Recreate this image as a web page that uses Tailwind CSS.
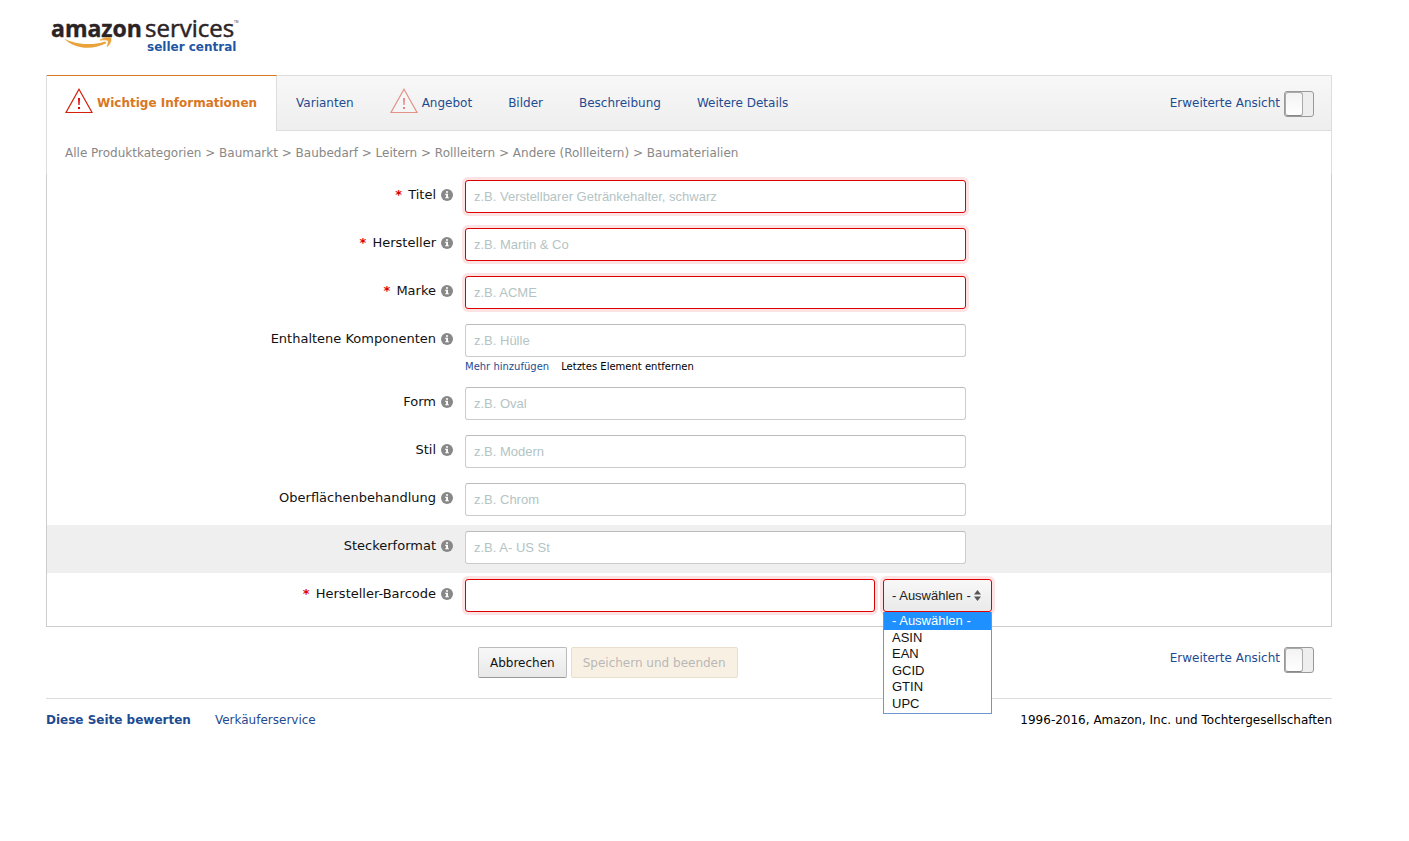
<!DOCTYPE html>
<html lang="de">
<head>
    <meta charset="UTF-8">
    <meta name="viewport" content="width=device-width, initial-scale=1.0">
    <title>Amazon Services Seller Central</title>
    <script src="https://cdn.jsdelivr.net/npm/@tailwindcss/browser@4"></script>
</head>
<body class="bg-white font-['Verdana','DejaVu_Sans',sans-serif] text-[12px] leading-5 text-[#111]">

    <!-- SVG SYMBOLS -->
    <svg class="hidden">
        <symbol id="warn" viewBox="0 0 28 26">
            <path d="M14 1.2 L27 24.5 H1 Z" fill="#fff" fill-opacity=".6" stroke="#d1200c" stroke-width="1.2"/>
            <path d="M13 10h2l-.4 7h-1.2zM13 19h2v2h-2z" fill="#d00"/>
        </symbol>
        <symbol id="info" viewBox="0 0 12 12">
            <circle cx="6" cy="6" r="6" fill="#888"/>
            <path d="M5 2.2h2v1.6H5zM4.2 4.8H7v3.4h.9v1.1H4.2V8.200h.9V5.900h-.9z" fill="#fff"/>
        </symbol>
    </svg>

    <div class="ml-[46px] mr-[77px]">

        <!-- LOGO -->
        <header class="h-[75px] pt-3">
            <svg class="block" width="200" height="44" viewBox="0 0 200 44" role="img" aria-label="amazon services seller central">
                <text x="5" y="25" font-family="Open Sans, sans-serif" font-size="23" font-weight="700" fill="#2b2324" stroke="#2b2324" stroke-width=".4">amazon</text>
                <text x="99" y="25" font-family="Open Sans, sans-serif" font-size="24" fill="#2b2324" stroke="#2b2324" stroke-width=".5">services</text>
                <text x="188" y="11" font-family="Open Sans, sans-serif" font-size="3" fill="#2b2324">TM</text>
                <text x="101" y="39" font-family="DejaVu Sans, sans-serif" font-size="12" font-weight="700" fill="#1f55a5">seller central</text>
                <path d="M18 26.500C29 32.500 46 34 59 29.500L60.500 31C47 38.500 29 37.500 18 26.500Z" fill="#e9a33a"/>
                <path d="M54 28.200C58 25.400 62 25.200 65 26C65.500 29.500 64 32.500 61 34.800C62 32 62.700 29.800 62 28.600C60 27.600 57 27.800 54 28.200Z" fill="#e9a33a" stroke="#e9a33a" stroke-width=".6"/>
            </svg>
        </header>

        <main>
            <!-- TABS -->
            <nav class="flex h-14 border border-[#ddd] bg-linear-to-b from-[#f8f8f8] to-[#eee]">
                <a href="#" class="-mt-px -mb-px flex items-center gap-1 border-t border-r border-t-[#d9771f] border-r-[#ddd] bg-white pr-[19px] pb-[2px] pl-[18px] font-bold text-[#d9771f]">
                    <svg class="-mt-1 h-[26px] w-7"><use href="#warn"/></svg>
                    Wichtige Informationen
                </a>
                <div class="flex flex-1 items-center gap-9 pl-[19px] text-[#1f4b91]">
                    <a href="#">Varianten</a>
                    <a href="#" class="flex items-center gap-1">
                        <svg class="-mt-1 h-[26px] w-7 opacity-45"><use href="#warn"/></svg>
                        Angebot
                    </a>
                    <a href="#">Bilder</a>
                    <a href="#">Beschreibung</a>
                    <a href="#">Weitere Details</a>
                </div>
                <label class="flex items-center gap-1 pr-[17px] text-[#1f4b91]">
                    Erweiterte Ansicht
                    <span class="mt-[2px] flex h-[26px] w-[30px] rounded-[3px] border border-[#999] bg-[#eee]">
                        <input type="checkbox" class="h-6 w-[18px] appearance-none rounded-[3px] border border-[#aaa] border-b-[#888] bg-linear-to-b from-[#f3f3f3] to-white">
                    </span>
                </label>
            </nav>

            <div class="h-[43px] border-x border-[#ddd] px-[18px] pt-3 text-[#888]">
                Alle Produktkategorien &gt; Baumarkt &gt; Baubedarf &gt; Leitern &gt; Rollleitern &gt; Andere (Rollleitern) &gt; Baumaterialien
            </div>

            <!-- FORM -->
            <form id="product" class="border-x border-b border-[#ccc] pb-[5px] text-[13px]">
                <div class="grid grid-cols-[406px_501px] gap-3 pt-[6px] pb-[9px]">
                    <div class="flex items-start justify-end gap-[5px] pt-[5px]">
                        <label for="titel"><span class="mr-[2px] font-bold text-[#d00]">*</span> Titel</label>
                        <svg class="mt-1 size-3"><use href="#info"/></svg>
                    </div>
                    <input id="titel" placeholder="z.B. Verstellbarer Getränkehalter, schwarz" class="h-[33px] rounded-[3px] border border-[#d00] bg-white px-2 font-['Liberation_Sans',sans-serif] ring-3 ring-[#fde3e3] placeholder:text-[#b4c4c4]">
                </div>
                <div class="grid grid-cols-[406px_501px] gap-3 pt-[6px] pb-[9px]">
                    <div class="flex items-start justify-end gap-[5px] pt-[5px]">
                        <label for="hersteller"><span class="mr-[2px] font-bold text-[#d00]">*</span> Hersteller</label>
                        <svg class="mt-1 size-3"><use href="#info"/></svg>
                    </div>
                    <input id="hersteller" placeholder="z.B. Martin &amp; Co" class="h-[33px] rounded-[3px] border border-[#d00] bg-white px-2 font-['Liberation_Sans',sans-serif] ring-3 ring-[#fde3e3] placeholder:text-[#b4c4c4]">
                </div>
                <div class="grid grid-cols-[406px_501px] gap-3 pt-[6px] pb-[9px]">
                    <div class="flex items-start justify-end gap-[5px] pt-[5px]">
                        <label for="marke"><span class="mr-[2px] font-bold text-[#d00]">*</span> Marke</label>
                        <svg class="mt-1 size-3"><use href="#info"/></svg>
                    </div>
                    <input id="marke" placeholder="z.B. ACME" class="h-[33px] rounded-[3px] border border-[#d00] bg-white px-2 font-['Liberation_Sans',sans-serif] ring-3 ring-[#fde3e3] placeholder:text-[#b4c4c4]">
                </div>
                <div class="grid grid-cols-[406px_501px] gap-x-3 pt-[6px] pb-[5px]">
                    <div class="flex items-start justify-end gap-[5px] pt-[5px]">
                        <label for="komponenten">Enthaltene Komponenten</label>
                        <svg class="mt-1 size-3"><use href="#info"/></svg>
                    </div>
                    <input id="komponenten" placeholder="z.B. Hülle" class="h-[33px] rounded-[3px] border border-[#ccc] border-t-[#bbb] bg-white px-2 font-['Liberation_Sans',sans-serif] placeholder:text-[#b4c4c4]">
                    <div class="col-start-2 flex h-[19px] gap-3 text-[10px]">
                        <a href="#" class="text-[#1f4b91]">Mehr hinzufügen</a>
                        <a href="#" class="text-black">Letztes Element entfernen</a>
                    </div>
                </div>
                <div class="grid grid-cols-[406px_501px] gap-3 pt-[6px] pb-[9px]">
                    <div class="flex items-start justify-end gap-[5px] pt-[5px]">
                        <label for="form">Form</label>
                        <svg class="mt-1 size-3"><use href="#info"/></svg>
                    </div>
                    <input id="form" placeholder="z.B. Oval" class="h-[33px] rounded-[3px] border border-[#ccc] border-t-[#bbb] bg-white px-2 font-['Liberation_Sans',sans-serif] placeholder:text-[#b4c4c4]">
                </div>
                <div class="grid grid-cols-[406px_501px] gap-3 pt-[6px] pb-[9px]">
                    <div class="flex items-start justify-end gap-[5px] pt-[5px]">
                        <label for="stil">Stil</label>
                        <svg class="mt-1 size-3"><use href="#info"/></svg>
                    </div>
                    <input id="stil" placeholder="z.B. Modern" class="h-[33px] rounded-[3px] border border-[#ccc] border-t-[#bbb] bg-white px-2 font-['Liberation_Sans',sans-serif] placeholder:text-[#b4c4c4]">
                </div>
                <div class="grid grid-cols-[406px_501px] gap-3 pt-[6px] pb-[9px]">
                    <div class="flex items-start justify-end gap-[5px] pt-[5px]">
                        <label for="oberflaeche">Oberflächenbehandlung</label>
                        <svg class="mt-1 size-3"><use href="#info"/></svg>
                    </div>
                    <input id="oberflaeche" placeholder="z.B. Chrom" class="h-[33px] rounded-[3px] border border-[#ccc] border-t-[#bbb] bg-white px-2 font-['Liberation_Sans',sans-serif] placeholder:text-[#b4c4c4]">
                </div>
                <div class="grid grid-cols-[406px_501px] gap-3 bg-[#efefef] pt-[6px] pb-[9px]">
                    <div class="flex items-start justify-end gap-[5px] pt-[5px]">
                        <label for="stecker">Steckerformat</label>
                        <svg class="mt-1 size-3"><use href="#info"/></svg>
                    </div>
                    <input id="stecker" placeholder="z.B. A- US St" class="h-[33px] rounded-[3px] border border-[#ccc] border-t-[#bbb] bg-white px-2 font-['Liberation_Sans',sans-serif] placeholder:text-[#b4c4c4]">
                </div>
                <div class="grid grid-cols-[406px_527px] gap-3 pt-[6px] pb-[9px]">
                    <div class="flex items-start justify-end gap-[5px] pt-[5px]">
                        <label for="barcode"><span class="mr-[2px] font-bold text-[#d00]">*</span> Hersteller-Barcode</label>
                        <svg class="mt-1 size-3"><use href="#info"/></svg>
                    </div>
                    <div class="flex gap-2 font-['Liberation_Sans',sans-serif]">
                        <input id="barcode" class="h-[33px] min-w-0 flex-1 rounded-[3px] border border-[#d00] bg-white px-2 ring-3 ring-[#fde3e3]">
                        <div class="relative w-[109px]">
                            <select aria-label="Barcode-Typ" class="block h-[33px] w-full appearance-none rounded-[3px] border border-[#d00] bg-linear-to-b from-[#f8f8f8] to-[#eaeaea] pl-2 text-[#222] ring-3 ring-[#fde3e3]">
                                <option>- Auswählen -</option>
                                <option>ASIN</option>
                                <option>EAN</option>
                                <option>GCID</option>
                                <option>GTIN</option>
                                <option>UPC</option>
                            </select>
                            <svg class="pointer-events-none absolute top-[11px] right-[11px]" width="7" height="11" viewBox="0 0 7 11" fill="#555"><path d="M0 4.500 3.500 0 7 4.500zM0 6.500 3.500 11 7 6.500z"/></svg>
                            <!-- open list -->
                            <ul class="absolute top-[33px] left-0 w-full border border-t-0 border-[#6e96d0] bg-white pb-[2px] leading-[17px]">
                                <li class="h-[18px] bg-[#1e90ff] pl-2 text-white">- Auswählen -</li>
                                <li class="h-[15px] pl-2 leading-4">ASIN</li>
                                <li class="pl-2">EAN</li>
                                <li class="h-4 pl-2">GCID</li>
                                <li class="pl-2">GTIN</li>
                                <li class="h-4 pl-2">UPC</li>
                            </ul>
                        </div>
                    </div>
                </div>
            </form>

            <!-- BUTTONS -->
            <div class="flex h-[72px] items-start border-b border-[#ddd] pt-5 pr-[18px]">
                <div class="ml-[432px] flex gap-1">
                    <button form="product" type="reset" class="h-[31px] rounded-[2px] border border-[#bbb] border-b-[#999] bg-linear-to-b from-[#f8f8f8] to-[#e8e8e8] px-[11px]">Abbrechen</button>
                    <button disabled class="h-[31px] rounded-[2px] border border-[#e8dfcb] bg-[#f8f1e3] px-[11px] text-[#b8b8b8]">Speichern und beenden</button>
                </div>
                <label class="ml-auto flex gap-1 text-[#1f4b91]">
                    <span class="pt-px">Erweiterte Ansicht</span>
                    <span class="flex h-[26px] w-[30px] rounded-[3px] border border-[#999] bg-[#eee]">
                        <input type="checkbox" class="h-6 w-[18px] appearance-none rounded-[3px] border border-[#aaa] border-b-[#888] bg-linear-to-b from-[#f3f3f3] to-white">
                    </span>
                </label>
            </div>
        </main>

        <footer class="flex gap-6 pt-[11px]">
            <a href="#" class="font-bold text-[#1f4b91]">Diese Seite bewerten</a>
            <a href="#" class="text-[#1f4b91]">Verkäuferservice</a>
            <span class="ml-auto text-black">1996-2016, Amazon, Inc. und Tochtergesellschaften</span>
        </footer>
    </div>

</body>
</html>
